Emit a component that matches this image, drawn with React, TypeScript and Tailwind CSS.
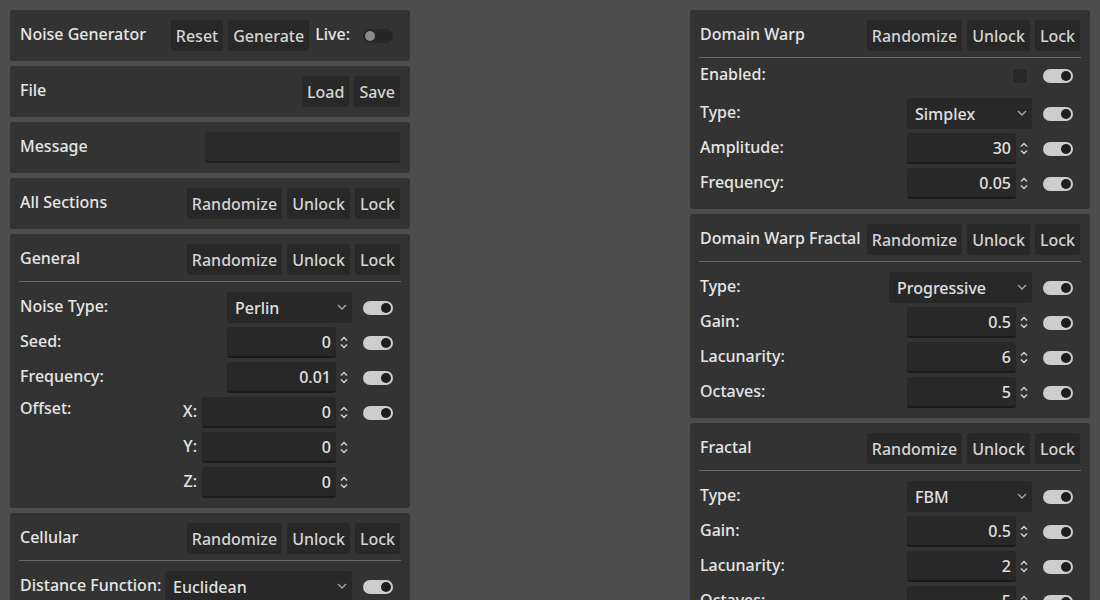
import type { ReactNode } from 'react'

function Btn({ children }: { children: ReactNode }) {
  return (
    <button
      type="button"
      className="h-[31px] px-[5px] rounded-[3px] bg-[#282828] text-[#d4d4d4] leading-none"
    >
      {children}
    </button>
  )
}

function Toggle({ on = true }: { on?: boolean }) {
  return on ? (
    <div className="relative w-[30px] h-[14px] rounded-full bg-[#cdcdcd] shrink-0">
      <div className="absolute right-[2px] top-[2px] w-[10px] h-[10px] rounded-full bg-[#1e1e1e]" />
    </div>
  ) : (
    <div className="relative w-[30px] h-[14px] rounded-full bg-[#262626] shrink-0">
      <div className="absolute left-[2px] top-[2px] w-[10px] h-[10px] rounded-full bg-[#8a8a8a]" />
    </div>
  )
}

function Select({ value, w = 'w-[125px]' }: { value: string; w?: string }) {
  return (
    <div className={`${w} h-[31px] rounded-[3px] bg-[#282828] flex items-center pl-[8px] pr-[5px] text-[#e0e0e0]`}>
      <span className="flex-1">{value}</span>
      <svg width="10" height="6" viewBox="0 0 10 6" className="mb-[2px]">
        <path d="M1 1 L5 5 L9 1" fill="none" stroke="#a8a8a8" strokeWidth="1.3" />
      </svg>
    </div>
  )
}

function Spin({ value, w = 'w-[109px]' }: { value: string; w?: string }) {
  return (
    <div className="flex items-center">
      <div
        className={`${w} h-[31px] rounded-[3px] bg-[#282828] border-b-2 border-[#1b1b1b] flex items-center justify-end pr-[5px] text-[#e0e0e0]`}
      >
        {value}
      </div>
      <div className="w-[16px] flex justify-center">
        <svg width="10" height="15" viewBox="0 0 10 15">
          <path d="M2 5.5 L5 2.5 L8 5.5" fill="none" stroke="#d0d0d0" strokeWidth="1.5" />
          <path d="M2 9.5 L5 12.5 L8 9.5" fill="none" stroke="#d0d0d0" strokeWidth="1.5" />
        </svg>
      </div>
    </div>
  )
}

function Panel({ children }: { children: ReactNode }) {
  return <div className="bg-[#333333] rounded-[3px] p-[10px]">{children}</div>
}

function Label({ children, className = '' }: { children: ReactNode; className?: string }) {
  return <span className={`text-[#e6e6e6] whitespace-nowrap mb-[4px] ${className}`}>{children}</span>
}

function Header({ title, children }: { title: string; children?: ReactNode }) {
  return (
    <div className="flex items-center h-[31px]">
      <Label className="flex-1">{title}</Label>
      <div className="flex items-center gap-[5px]">{children}</div>
    </div>
  )
}

function SectionHeader({ title }: { title: string }) {
  return (
    <>
      <Header title={title}>
        <Btn>Randomize</Btn>
        <Btn>Unlock</Btn>
        <Btn>Lock</Btn>
      </Header>
      <div className="-mx-px mt-[6px] mb-[10px] h-px bg-[#6a6a6a]" />
    </>
  )
}

function Row({ label, children }: { label: string; children: ReactNode }) {
  return (
    <div className="flex items-center h-[31px]">
      <Label className="flex-1">{label}</Label>
      {children}
      <div className="ml-[11px] mr-[7px]">
        <Toggle />
      </div>
    </div>
  )
}

function Axis({ axis, toggle }: { axis: string; toggle?: boolean }) {
  return (
    <div className="flex items-center h-[31px]">
      <Label className="w-[22px] text-right mr-[5px]">{axis}</Label>
      <Spin value="0" w="w-[134px]" />
      <div className="ml-[11px] mr-[7px] w-[30px]">{toggle && <Toggle />}</div>
    </div>
  )
}

export default function App() {
  return (
    <div className="h-[600px] w-[1100px] overflow-hidden bg-[#4d4d4d] font-['Noto_Sans',sans-serif] font-medium text-base">
      <div className="flex justify-between px-[10px] pt-[10px]">
        <div className="w-[400px] flex flex-col gap-[5px]">
          <Panel>
            <Header title="Noise Generator">
              <Btn>Reset</Btn>
              <Btn>Generate</Btn>
              <Label className="ml-px">Live:</Label>
              <div className="ml-[8px] mr-[7px]">
                <Toggle on={false} />
              </div>
            </Header>
          </Panel>

          <Panel>
            <Header title="File">
              <Btn>Load</Btn>
              <Btn>Save</Btn>
            </Header>
          </Panel>

          <Panel>
            <Header title="Message">
              <div className="w-[195px] h-[31px] rounded-[3px] bg-[#2a2a2a] border-b-2 border-[#222222]" />
            </Header>
          </Panel>

          <Panel>
            <Header title="All Sections">
              <Btn>Randomize</Btn>
              <Btn>Unlock</Btn>
              <Btn>Lock</Btn>
            </Header>
          </Panel>

          <Panel>
            <SectionHeader title="General" />
            <div className="flex flex-col gap-[4px]">
              <Row label="Noise Type:">
                <Select value="Perlin" />
              </Row>
              <Row label="Seed:">
                <Spin value="0" />
              </Row>
              <Row label="Frequency:">
                <Spin value="0.01" />
              </Row>
              <div className="flex items-start">
                <span className="flex-1 text-[#e6e6e6] -mt-px">Offset:</span>
                <div className="flex flex-col gap-[4px]">
                  <Axis axis="X:" toggle />
                  <Axis axis="Y:" />
                  <Axis axis="Z:" />
                </div>
              </div>
            </div>
          </Panel>

          <Panel>
            <SectionHeader title="Cellular" />
            <div className="flex flex-col gap-[4px]">
              <Row label="Distance Function:">
                <Select value="Euclidean" w="w-[187px]" />
              </Row>
              <Row label="Return Type:">
                <Select value="Distance" />
              </Row>
              <Row label="Jitter:">
                <Spin value="1" />
              </Row>
            </div>
          </Panel>
        </div>

        <div className="w-[400px] flex flex-col gap-[5px]">
          <Panel>
            <SectionHeader title="Domain Warp" />
            <div className="flex flex-col gap-[4px]">
              <div className="flex items-center h-[26px] -mt-[5px] mb-[5px]">
                <Label className="flex-1">Enabled:</Label>
                <div className="w-[14px] h-[14px] rounded-[2px] bg-[#282828]" />
                <div className="ml-[16px] mr-[7px]">
                  <Toggle />
                </div>
              </div>
              <Row label="Type:">
                <Select value="Simplex" />
              </Row>
              <Row label="Amplitude:">
                <Spin value="30" />
              </Row>
              <Row label="Frequency:">
                <Spin value="0.05" />
              </Row>
            </div>
          </Panel>

          <Panel>
            <SectionHeader title="Domain Warp Fractal" />
            <div className="flex flex-col gap-[4px]">
              <Row label="Type:">
                <Select value="Progressive" w="w-[143px]" />
              </Row>
              <Row label="Gain:">
                <Spin value="0.5" />
              </Row>
              <Row label="Lacunarity:">
                <Spin value="6" />
              </Row>
              <Row label="Octaves:">
                <Spin value="5" />
              </Row>
            </div>
          </Panel>

          <Panel>
            <SectionHeader title="Fractal" />
            <div className="flex flex-col gap-[4px]">
              <Row label="Type:">
                <Select value="FBM" />
              </Row>
              <Row label="Gain:">
                <Spin value="0.5" />
              </Row>
              <Row label="Lacunarity:">
                <Spin value="2" />
              </Row>
              <Row label="Octaves:">
                <Spin value="5" />
              </Row>
              <Row label="Weighted Strength:">
                <Spin value="0" />
              </Row>
            </div>
          </Panel>
        </div>
      </div>
    </div>
  )
}
